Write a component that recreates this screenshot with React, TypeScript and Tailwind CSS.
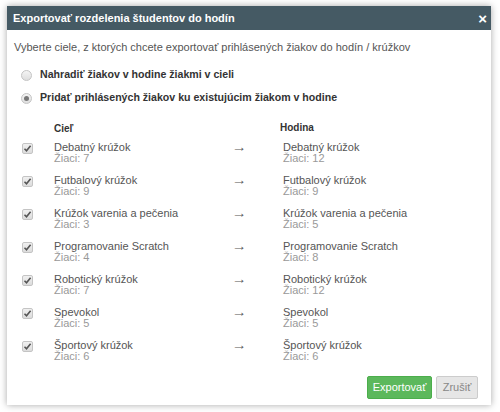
import React from "react";

const rows = [
  ["Debatný krúžok", 7, "Debatný krúžok", 12],
  ["Futbalový krúžok", 9, "Futbalový krúžok", 9],
  ["Krúžok varenia a pečenia", 3, "Krúžok varenia a pečenia", 5],
  ["Programovanie Scratch", 4, "Programovanie Scratch", 8],
  ["Robotický krúžok", 7, "Robotický krúžok", 12],
  ["Spevokol", 5, "Spevokol", 5],
  ["Športový krúžok", 6, "Športový krúžok", 6],
] as const;

function Radio({ checked }: { checked?: boolean }) {
  return (
    <span className="ml-[7px] w-[11px] h-[11px] rounded-full border border-[#c4c4c4] bg-gradient-to-b from-[#f4f4f4] to-[#dedede] flex items-center justify-center">
      {checked && <span className="w-[5px] h-[5px] rounded-full bg-[#777]" />}
    </span>
  );
}

function Check() {
  return (
    <span className="ml-[8px] w-[11px] h-[11px] rounded-[2px] border border-[#c4c4c4] bg-gradient-to-b from-[#f0f0f0] to-[#dcdcdc] flex items-center justify-center">
      <svg width="9" height="9" viewBox="0 0 9 9">
        <path d="M1.5 4.8 L3.5 6.8 L7.6 1.8" fill="none" stroke="#555" strokeWidth="1.6" />
      </svg>
    </span>
  );
}

export default function App() {
  return (
    <div
      className="w-[500px] h-[412px] bg-white pt-[6px] pl-[7px]"
      style={{ fontFamily: '"Liberation Sans", Arial, sans-serif' }}
    >
      <div className="w-[484px] h-[399px] bg-white shadow-[0_0_7px_rgba(0,0,0,0.35)] flex flex-col">
        <div className="h-[24px] bg-[#455a64] flex items-center justify-between pl-[6px] pr-[4px]">
          <span className="text-white font-bold text-[11px]">Exportovať rozdelenia študentov do hodín</span>
          <span className="text-white font-bold text-[15px] leading-none">×</span>
        </div>
        <div className="flex-1 flex flex-col px-[7px] pt-[11px] text-[11px]">
          <div className="text-[#555] leading-[13px]">
            Vyberte ciele, z ktorých chcete exportovať prihlásených žiakov do hodín / krúžkov
          </div>
          <div className="mt-[14px] flex items-center h-[14px]">
            <Radio />
            <span className="ml-[8px] font-bold text-[#333] text-[10.6px]">Nahradiť žiakov v hodine žiakmi v cieli</span>
          </div>
          <div className="mt-[9px] flex items-center h-[14px]">
            <Radio checked />
            <span className="ml-[8px] font-bold text-[#333] text-[10.6px]">Pridať prihlásených žiakov ku existujúcim žiakom v hodine</span>
          </div>
          <div className="mt-[14px] grid grid-cols-[40px_178px_51px_1fr] items-center h-[14px]">
            <div />
            <div className="font-bold text-[#333] text-[10px] mt-[2px]">Cieľ</div>
            <div />
            <div className="font-bold text-[#333] text-[10px] -ml-[3px]">Hodina</div>
          </div>
          <div className="mt-[9px] flex flex-col gap-[9px]">
            {rows.map(([a, an, b, bn]) => (
              <div key={a} className="grid grid-cols-[40px_178px_51px_1fr] items-start h-[24px]">
                <div className="flex items-center h-[12px]">
                  <Check />
                </div>
                <div className="leading-[11px]">
                  <div className="text-[#555]">{a}</div>
                  <div className="text-[#999]">Žiaci: {an}</div>
                </div>
                <div className="text-[#555] text-[12px] leading-[11px] scale-x-125 origin-left">→</div>
                <div className="leading-[11px]">
                  <div className="text-[#555]">{b}</div>
                  <div className="text-[#999]">Žiaci: {bn}</div>
                </div>
              </div>
            ))}
          </div>
          <div className="mt-auto mb-[6px] flex justify-end gap-[4px] pr-[6px]">
            <button className="h-[23px] w-[65px] bg-[#5cb85c] border border-[#4cae4c] text-white text-[11px] rounded-[2px]">Exportovať</button>
            <button className="h-[23px] w-[42px] bg-[#e6e6e6] border border-[#ccc] text-[#888] text-[11px] rounded-[2px]">Zrušiť</button>
          </div>
        </div>
      </div>
    </div>
  );
}
